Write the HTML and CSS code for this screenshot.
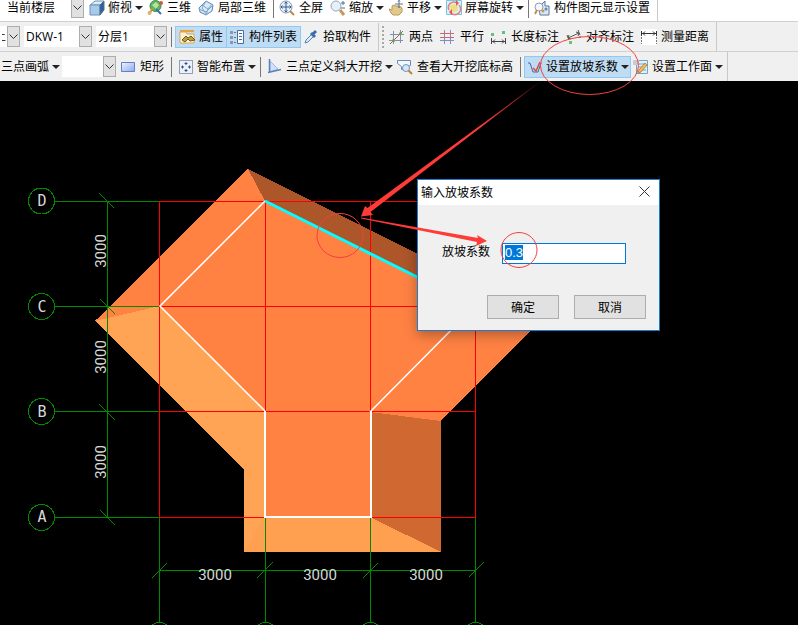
FILE: index.html
```html
<!DOCTYPE html>
<html lang="zh-CN">
<head>
    <meta charset="UTF-8">
    <meta name="viewport" content="width=device-width, initial-scale=1.0">
    <title>设置放坡系数</title>
    <link rel="stylesheet" href="styles.css">
</head>
<body>
    <!-- View toolbar -->
    <div class="bar bar-view">
        <div class="tools">
            <div class="combo floor">
                <select aria-label="楼层"><option>当前楼层</option></select>
                <span class="drop"><svg width="9" height="6"><path d="M.5.5l4 4 4-4"/></svg></span>
            </div>
            <button class="tool split">
                <svg class="icon" viewBox="0 0 16 16"><path d="M1 5l5-4h9l-4 4z" fill="#dcebf8" stroke="#6d92b7"/><path d="M1 5h10v10H1z" fill="#a9cbea" stroke="#6d92b7"/><path d="M11 5l4-4v9l-4 5z" fill="#2f5f94" stroke="#4d7297"/></svg>
                <span>俯视</span>
            </button>
            <button class="tool">
                <svg class="icon" viewBox="0 0 16 16"><circle cx="8.500" cy="6" r="5.500" fill="#5db55c" stroke="#3c8b58"/><path d="M5 5l4-3 3 3-3 4z" fill="#b3e69a"/><path d="M2 14l4-6" stroke="#c79143" stroke-width="2"/><path d="M9 9l5 5" stroke="#3c6fae" stroke-width="2"/><circle cx="2.500" cy="13" r="2" fill="#e2b26b"/><circle cx="14" cy="3" r="2" fill="#d05a3c"/></svg>
                <span>三维</span>
            </button>
            <button class="tool">
                <svg class="icon" viewBox="0 0 16 16"><path d="M1 8l7-7 7 4-1 6-6 4-6-3z" fill="#d9e9f7" stroke="#5788b8"/><path d="M4 5l6 4 4-5M8 1l-4 7 5 7M10 9l-2 6M1 9l7 3 6-6" fill="none" stroke="#7ea6cc"/></svg>
                <span>局部三维</span>
            </button>
            <i class="sep"></i>
            <button class="tool">
                <svg class="icon" viewBox="0 0 16 16"><circle cx="7" cy="7" r="6" fill="#e6f0fa" stroke="#8295ad"/><path d="M7 2v10M2 7h10M5.500 3.500L7 2l1.500 1.500M5.500 10.500L7 12l1.500-1.500M3.500 5.500L2 7l1.500 1.500M10.500 5.500L12 7l-1.500 1.500" fill="none" stroke="#35598c"/><path d="M11 11l4 4" stroke="#b58a4f" stroke-width="2"/></svg>
                <span>全屏</span>
            </button>
            <button class="tool split">
                <svg class="icon" viewBox="0 0 16 16"><circle cx="6" cy="6" r="5" fill="#e6f0fa" stroke="#9aa8ba"/><path d="M10 10l4 5" stroke="#c79a5b" stroke-width="3"/><path d="M11 3h4M13 1v4M11 8h4" stroke="#4a6fa0"/></svg>
                <span>缩放</span>
            </button>
            <button class="tool split">
                <svg class="icon" viewBox="0 0 16 16"><path d="M1 9l3 1V6l2-1 2 1 3 0 3 2 0 4-3 3H5L3 13z" fill="#e4c88a" stroke="#b99a62"/><path d="M11 0v8M7 4h8M10 1.500l1-1 1 1M10 6.500l1 1 1-1" fill="none" stroke="#60728a"/></svg>
                <span>平移</span>
            </button>
            <button class="tool split">
                <svg class="icon" viewBox="0 0 16 16"><path d="M.5.500h15v14H.5z" fill="#d6f0fa" stroke="#7cc5e3"/><path d="M4 6l4-2 4 3-1 4-5 1z" fill="#f2dc7b"/><path d="M3 10a5.500 5.500 0 0 1 8-7M13 5a5.500 5.500 0 0 1-8 8" fill="none" stroke="#ea7d76" stroke-width="1.500"/><path d="M10 0l3 3-3 3zM6 9v6l-3-3z" fill="#e15a50"/></svg>
                <span>屏幕旋转</span>
            </button>
            <i class="sep"></i>
            <button class="tool">
                <svg class="icon" viewBox="0 0 16 16"><path d="M5 7l6-6v5h4v9H6z" fill="#dfe9f4" stroke="#55779f"/><circle cx="5" cy="7" r="4" fill="#f4f8fc" stroke="#8f9fb3"/><path d="M3 10l-2 4" stroke="#c08c4d" stroke-width="2"/><circle cx="9" cy="11" r="1.500" fill="#d3973b"/><circle cx="12" cy="9" r="1.500" fill="#5a87bd"/></svg>
                <span>构件图元显示设置</span>
            </button>
        </div>
    </div>

    <!-- Component toolbar -->
    <div class="bar">
        <div class="tools">
            <div class="combo kind">
                <select aria-label="构件类型"><option>土</option></select>
                <span class="drop"><svg width="9" height="6"><path d="M.5.5l4 4 4-4"/></svg></span>
            </div>
            <div class="combo member">
                <select aria-label="构件"><option>DKW-1</option></select>
                <span class="drop"><svg width="9" height="6"><path d="M.5.5l4 4 4-4"/></svg></span>
            </div>
            <div class="combo layer">
                <select aria-label="分层"><option>分层1</option></select>
                <span class="drop"><svg width="9" height="6"><path d="M.5.5l4 4 4-4"/></svg></span>
            </div>
            <i class="sep tight"></i>
            <div class="toggles">
                <button class="tool on">
                    <svg class="icon" viewBox="0 0 16 16"><path d="M1 3h6l1 2h7v9H1z" fill="#fff4d9" stroke="#e5a340"/><path d="M1 2h14" stroke="#e5a340" stroke-width="2"/><path d="M3 11l4-4 2 2 3-2 4 4-5 1-2-2-3 3z" fill="#b7a33c" stroke="#6b5a28"/></svg>
                    <span>属性</span>
                </button>
                <button class="tool on">
                    <svg class="icon" viewBox="0 0 16 16"><path d="M1 2h3v3H1zM1 7h3v3H1zM1 12h3v3H1z" fill="#8497b5"/><path d="M5 3.500h2M5 8.500h2M5 13.500h2" stroke="#5f7598"/><path d="M8.500 1.500h6v13h-6z" fill="#f7fbff" stroke="#4c6c9c"/><path d="M10 4.500h3M10 7.500h3M10 10.500h3" stroke="#4c6c9c"/></svg>
                    <span>构件列表</span>
                </button>
            </div>
            <button class="tool">
                <svg class="icon" viewBox="0 0 16 16"><path d="M2 14l1-3 6-6 2 2-6 6z" fill="#d9ecfb" stroke="#5686b7"/><path d="M8 4l4 4M10 5l3-3" stroke="#3d6da8" stroke-width="3"/></svg>
                <span>拾取构件</span>
            </button>
            <i class="edge"></i>
            <i class="grip"></i>
            <button class="tool">
                <svg class="icon" viewBox="0 0 16 16"><path d="M4.500 2v13M11.500 1v13M1 5.500h14M0 11.500h14" stroke="#7f8fb5" fill="none"/><path d="M1 15L14 2" stroke="#c0504d"/><circle cx="4.500" cy="11.500" r="1.500" fill="#5fae4b"/><circle cx="11.500" cy="4.500" r="1.500" fill="#5fae4b"/></svg>
                <span>两点</span>
            </button>
            <button class="tool">
                <svg class="icon" viewBox="0 0 16 16"><path d="M4.500 1v14M10.500 1v14M0 11.500h14" stroke="#7f8fc5" fill="none"/><path d="M0 4.500h14M0 8.500h14" stroke="#d36565"/></svg>
                <span>平行</span>
            </button>
            <button class="tool">
                <svg class="icon" viewBox="0 0 16 16"><path d="M.5 9v6M14.500 9v6M1 12.500h13M4 10.500l-2 2 2 2M11 10.500l2 2-2 2" fill="none" stroke="#444"/><path d="M0 4h3v3H0zM11 2h3v3h-3z" fill="#66c178"/></svg>
                <span>长度标注</span>
            </button>
            <button class="tool">
                <svg class="icon" viewBox="0 0 16 16"><path d="M1 6l2 5M12 1l2 5M2 9l11-5M3 6L2 9l3 1M10 3l3 1-1 3" fill="none" stroke="#555"/><path d="M3 12h3v3H3zM13 7h2v2h-2z" fill="#66c178"/></svg>
                <span>对齐标注</span>
            </button>
            <button class="tool">
                <svg class="icon" viewBox="0 0 16 16"><path d="M0 0h16v16H0z" fill="#fff"/><path d="M.5 2v5M15.500 2v5M1 4.500h14M4 2.500l-2 2 2 2M12 2.500l2 2-2 2" fill="none" stroke="#333"/><path d="M.5 8v7M15.500 8v7" stroke="#777" stroke-dasharray="2 1"/></svg>
                <span>测量距离</span>
            </button>
        </div>
    </div>

    <!-- Drawing toolbar -->
    <div class="bar">
        <div class="tools">
            <button class="tool split bare"><span>三点画弧</span></button>
            <div class="combo radius">
                <select aria-label="半径"><option></option></select>
                <span class="drop"><svg width="9" height="6"><path d="M.5.5l4 4 4-4"/></svg></span>
            </div>
            <button class="tool">
                <svg class="icon" viewBox="0 0 16 16"><defs><linearGradient id="rectFill" x2="1" y2="1"><stop stop-color="#f0f5ff"/><stop offset="1" stop-color="#8ba9ec"/></linearGradient></defs><path d="M1.500 3.500h13v9h-13z" fill="url(#rectFill)" stroke="#6380c0"/></svg>
                <span>矩形</span>
            </button>
            <i class="sep"></i>
            <button class="tool split">
                <svg class="icon" viewBox="0 0 16 16"><path d="M1.500 1.500h13v13h-13z" fill="#eaf1fb" stroke="#394f73" stroke-dasharray="1 1"/><path d="M8 3v3M6.500 4.500h3M8 10v3M6.500 11.500h3M3 8h3M4.500 6.500v3M10 8h3M11.500 6.500v3" stroke="#35507d"/></svg>
                <span>智能布置</span>
            </button>
            <i class="sep"></i>
            <button class="tool split">
                <svg class="icon" viewBox="0 0 16 16"><path d="M3 2l8 8-8 3z" fill="#cfe1fa" stroke="#9db9e0"/><path d="M2.500 0v14M1 13.500l13-3" stroke="#5c80b8" stroke-width="1.500"/></svg>
                <span>三点定义斜大开挖</span>
            </button>
            <button class="tool">
                <svg class="icon" viewBox="0 0 16 16"><path d="M.5 1.500h13v5l-3 1v3h-6v-3l-4-3z" fill="#f4f8ff" stroke="#7187b5"/><circle cx="9" cy="9" r="3.500" fill="#d3e7f7" stroke="#7594b8"/><path d="M11.500 11.500L15 15" stroke="#b9853f" stroke-width="2"/></svg>
                <span>查看大开挖底标高</span>
            </button>
            <i class="sep tight"></i>
            <button class="tool split on">
                <svg class="icon" viewBox="0 0 16 16"><path d="M1 4h2l3 9h5l3-9" fill="none" stroke="#4c69a5"/><path d="M6 9l3 3 4-9" fill="none" stroke="#dc4e41" stroke-width="1.500"/></svg>
                <span>设置放坡系数</span>
            </button>
            <button class="tool split">
                <svg class="icon" viewBox="0 0 16 16"><path d="M3.500 1.500h11v13h-11z" fill="#dff1fb" stroke="#69a7cd"/><path d="M0 1h6v5H0z" fill="#c8ccd2"/><path d="M6 5h7M6 8h4M6 11h7" stroke="#69a7cd"/><path d="M5 14l1-3 6-7 2 2-6 7z" fill="#f1bd58" stroke="#c48337"/></svg>
                <span>设置工作面</span>
            </button>
        </div>
    </div>

    <main class="canvas">
        <svg class="drawing" width="100%" height="100%">
            <g transform="translate(0 -81)">
                <!-- Sloped pit faces -->
                <g class="faces">
                    <path fill="#ff8243" d="M248 169L544 317 441 421V552H244V470L95 321z"/>
                    <path fill="#ad562a" d="M248 169L544 317 475 306 265 201z"/>
                    <path fill="#ffa354" d="M95 321L160 306 265 411V552H244V470z"/>
                    <path fill="#ff9f50" d="M244 552L265 517H370L441 552z"/>
                    <path fill="#d06832" d="M370 412L441 421V552L370 517z"/>
                </g>

                <!-- Axis grid -->
                <path class="axis" d="M159.500 201V518M265.500 201V518M370.500 201V518M475.500 201V518M159 201.500H476M159 306.500H476M159 411.500H476M159 517.500H476"/>
                <path class="dim" d="M55 201.500H159M55 306.500H159M55 411.500H159M55 517.500H159M107.500 201V518M159.500 518V623M265.500 518V623M370.500 518V623M475.500 518V623M159 570.500H476"/>
                <path class="tick" d="M99 193l15 15M100 299l15 15M99 404l16 16M100 510l15 15M152 578l15-15M257 578l16-16M363 578l15-15M469 577l15-15"/>
                <g class="tick">
                    <circle cx="41.500" cy="201" r="13"/>
                    <circle cx="41.500" cy="306.500" r="13"/>
                    <circle cx="41.500" cy="411.500" r="13"/>
                    <circle cx="41.500" cy="517.500" r="13"/>
                    <circle cx="159.500" cy="635.500" r="13"/>
                    <circle cx="265.500" cy="635.500" r="13"/>
                    <circle cx="370.500" cy="635.500" r="13"/>
                    <circle cx="475.500" cy="635.500" r="13"/>
                </g>

                <!-- Pit bottom outline -->
                <path class="outline" d="M265 201L160 306 265 411M370 412L475 306"/>
                <path class="outline thick" d="M265 411V517H371V411"/>
                <path class="picked" d="M265 201L475 306"/>

                <g class="mark">
                    <text x="42" y="206">D</text>
                    <text x="42" y="312">C</text>
                    <text x="42" y="417">B</text>
                    <text x="42" y="522">A</text>
                </g>
                <g class="size">
                    <text x="215" y="580">3000</text>
                    <text x="320" y="580">3000</text>
                    <text x="426" y="580">3000</text>
                    <text transform="translate(106 251) rotate(-90)">3000</text>
                    <text transform="translate(106 357) rotate(-90)">3000</text>
                    <text transform="translate(106 462) rotate(-90)">3000</text>
                </g>
            </g>
        </svg>

        <form class="dialog" role="dialog" aria-labelledby="dialogTitle">
            <div class="title-bar">
                <span id="dialogTitle">输入放坡系数</span>
                <button class="close" type="button" aria-label="关闭"><svg width="11" height="11"><path d="M.5.5l10 10M10.500.5l-10 10"/></svg></button>
            </div>
            <div class="dialog-body">
                <div class="field">
                    <label for="slope">放坡系数</label>
                    <input id="slope" type="text" value="0.3">
                </div>
                <div class="actions">
                    <button type="button">确定</button>
                    <button type="button">取消</button>
                </div>
            </div>
        </form>
    </main>

    <!-- Guide marks over the toolbar, drawing and dialog -->
    <svg class="guide" width="100%" height="100%">
        <defs>
            <linearGradient id="fade" gradientUnits="userSpaceOnUse" x1="545" y1="78" x2="480" y2="127">
                <stop stop-color="#ff3b37" stop-opacity="0.3"/>
                <stop offset="1" stop-color="#ff3b37"/>
            </linearGradient>
        </defs>
        <g class="ring">
            <ellipse cx="589.500" cy="65.500" rx="49" ry="29"/>
            <ellipse cx="340" cy="235.500" rx="23" ry="22"/>
            <ellipse cx="519" cy="250" rx="18" ry="17.500"/>
        </g>
        <path fill="url(#fade)" d="M545 78L367.500 208 365 206 361 216.500 373 215 370.500 212z"/>
        <path fill="#ff3b37" d="M361 217.500L478 238 477 235 487 241 476 246 477 242 361 218.500z"/>
    </svg>

    <script>
        const slope = document.getElementById('slope');
        slope.focus();
        slope.select();
    </script>
</body>
</html>
```
FILE: styles.css
```css
* {
    box-sizing: border-box;
}

body {
    display: flex;
    flex-direction: column;
    min-height: 100vh;
    margin: 0;
    overflow: hidden;
    background-color: #f0f0f0;
    color: #000;
    font-family: "Open Sans", "Noto Sans CJK SC", sans-serif;
    font-size: 12px;
}

button,
select,
input {
    font: inherit;
    color: inherit;
}

/* Toolbars */
.bar {
    display: flex;
    height: 30px;
    border-bottom: 1px solid #d0d0d0;
    overflow: hidden;
}

.bar-view {
    height: 22px;
    background-color: #fff;
}

.tools {
    display: flex;
    flex: none;
    align-items: center;
    border-right: 1px solid #c8c8c8;
}

.bar-view .tools {
    padding-bottom: 6px;
}

.tool {
    display: flex;
    flex: none;
    align-items: center;
    gap: 4px;
    height: 22px;
    padding: 0 7px 0 0;
    border: none;
    background: none;
    line-height: 16px;
    white-space: nowrap;
}

.tool.split {
    gap: 3px;
    padding-right: 4px;
}

.tool.split::after {
    content: "";
    border: solid transparent;
    border-width: 4px 4px 0;
    border-top-color: #222;
}

.tool.on {
    padding: 0 3px;
    border: 1px solid #90c8f6;
    background-color: #c0dcf3;
}

.tool.split.on {
    padding: 0 1px 0 2px;
    margin-right: 2px;
}

.tool.split.bare {
    padding: 0 2px 0 1px;
}

.icon {
    width: 16px;
    height: 16px;
    flex: none;
}

.toggles {
    display: flex;
    margin-right: 2px;
}

.toggles .tool + .tool {
    padding-left: 2px;
    border-left: none;
}

.sep {
    flex: none;
    width: 1px;
    height: 20px;
    margin-right: 6px;
    background-color: #777;
}

.sep.tight {
    margin-right: 3px;
}

.bar-view .sep {
    margin-right: 5px;
}

.edge {
    width: 1px;
    height: 28px;
    margin-right: 3px;
    background-color: #c8c8c8;
}

.grip {
    width: 2px;
    height: 22px;
    margin-right: 5px;
    background: repeating-linear-gradient(#aaa 0 2px, transparent 2px 4px);
}

.combo {
    display: flex;
    flex: none;
    height: 21px;
    margin-right: 4px;
    background-color: #fff;
}

.combo select {
    appearance: none;
    flex: 1;
    min-width: 0;
    padding: 0 0 0 2px;
    border: none;
    border-radius: 0;
    background: none;
}

.drop {
    display: flex;
    flex: none;
    align-items: center;
    justify-content: center;
    width: 13px;
    border: 1px solid #adadad;
    background-color: #e1e1e1;
}

.drop path,
.close path {
    fill: none;
    stroke: #333;
}

.floor {
    width: 79px;
    margin-left: 5px;
    margin-right: 5px;
}

.kind {
    width: 20px;
}

.kind select {
    text-indent: -8px;
}

.member {
    width: 68px;
}

.layer {
    width: 71px;
}

.radius {
    width: 54px;
}

/* Drawing area */
.canvas {
    position: relative;
    flex: 1;
    margin-top: -1px;
    background-color: #000;
    overflow: hidden;
}

.drawing {
    position: absolute;
    inset: 0;
}

.faces,
.axis,
.dim,
.tick {
    shape-rendering: crispEdges;
}

.axis,
.dim,
.tick {
    fill: none;
    stroke: #008a00;
}

.axis {
    stroke: #f00;
}

.outline {
    fill: none;
    stroke: #fff;
    stroke-width: 1.5;
}

.thick {
    stroke-width: 2;
}

.picked {
    stroke: #0ff;
    stroke-width: 3;
}

.mark,
.size {
    fill: #d8d8d8;
    font-family: Roboto, sans-serif;
    font-size: 15px;
    text-anchor: middle;
}

.mark {
    font-family: "DejaVu Sans Mono", monospace;
}

/* Dialog */
.dialog {
    position: absolute;
    top: 98px;
    left: 417px;
    width: 243px;
    border: 1px solid #1a7bd0;
    background-color: #f0f0f0;
    box-shadow: 0 4px 12px rgba(0, 0, 0, 0.3);
}

.title-bar {
    display: flex;
    align-items: center;
    justify-content: space-between;
    height: 25px;
    padding: 0 9px 2px 3px;
    background-color: #fff;
}

.close {
    display: flex;
    padding: 0;
    border: none;
    background: none;
}

.dialog-body {
    padding: 38px 13px 11px 24px;
}

.field {
    display: flex;
    align-items: flex-start;
    gap: 12px;
    padding-right: 20px;
    line-height: 18px;
}

.field input {
    flex: 1;
    min-width: 0;
    height: 21px;
    padding: 0 2px 2px;
    border: 1px solid #0078d7;
    background-color: #fff;
    outline: none;
    font-family: "Liberation Sans", sans-serif;
    font-size: 13px;
}

.field input::selection {
    background-color: #0078d7;
    color: #fff;
}

.actions {
    display: flex;
    justify-content: flex-end;
    gap: 15px;
    margin-top: 31px;
}

.actions button {
    width: 72px;
    height: 24px;
    padding: 0;
    border: 1px solid #adadad;
    background-color: #e1e1e1;
}

.guide {
    position: absolute;
    inset: 0;
    pointer-events: none;
}

.ring {
    fill: none;
    stroke: #f2413d;
    stroke-width: 1;
}
```
